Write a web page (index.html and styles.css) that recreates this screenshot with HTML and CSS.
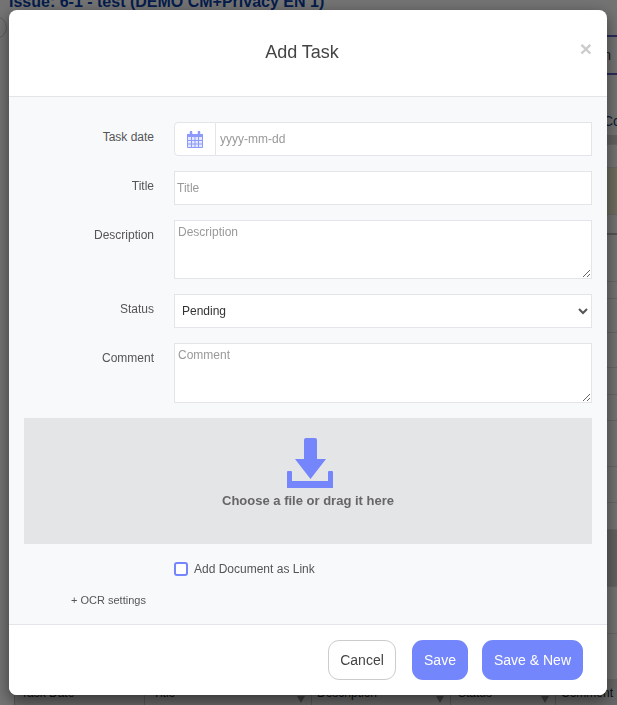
FILE: index.html
```html
<!DOCTYPE html>
<html lang="en">
<head>
<meta charset="utf-8">
<title>Add Task</title>
<link rel="stylesheet" href="styles.css">
</head>
<body>
<div class="page">
  <h1 class="issue-title">Issue: 6-1 - test (DEMO CM+Privacy EN 1)</h1>
  <div class="page-pill"></div>
  <div class="page-tab"><span class="page-tab-end">n</span></div>
  <div class="page-rows">
    <div class="page-row page-row-text"><span>Co</span></div>
    <div class="page-row page-row-band"></div>
    <div class="page-row"></div>
    <div class="page-row page-row-yellow"></div>
    <div class="page-row page-row-heavy"></div>
    <div class="page-row"></div>
    <div class="page-row"></div>
    <div class="page-row"></div>
    <div class="page-row"></div>
    <div class="page-row"></div>
    <div class="page-row"></div>
    <div class="page-row"></div>
    <div class="page-row"></div>
    <div class="page-row"></div>
    <div class="page-row page-row-band"></div>
    <div class="page-row"></div>
    <div class="page-row"></div>
  </div>
  <div class="table-head">
    <div class="th th-date">Task Date</div>
    <div class="th th-title">Title<i class="sort"></i></div>
    <div class="th th-desc">Description<i class="sort"></i></div>
    <div class="th th-status">Status<i class="sort"></i></div>
    <div class="th th-comment">Comment</div>
  </div>
</div>
<div class="backdrop"></div>
<div class="modal">
  <header class="modal-header">
    <h2 class="modal-title">Add Task</h2>
    <span class="modal-close">&times;</span>
  </header>
  <form class="modal-body">
    <div class="form-row">
      <label class="form-label">Task date</label>
      <div class="input-group">
        <span class="addon">
          <svg class="cal-icon" width="16" height="17" viewBox="0 0 16 17">
            <rect class="cal-cells" x="0.500" y="3.500" width="15" height="13"/>
            <rect class="cal-band" x="0" y="3" width="16" height="3"/>
            <path class="cal-rings" d="M4 1v3M12 1v3"/>
            <path class="cal-grid" d="M0.500 3.500h15v13H0.500zM1 9.500h14M1 13h14M4.500 6v10M8 6v10M11.500 6v10"/>
          </svg>
        </span>
        <input class="control control-date" type="text" placeholder="yyyy-mm-dd">
      </div>
    </div>
    <div class="form-row">
      <label class="form-label">Title</label>
      <input class="control" type="text" placeholder="Title">
    </div>
    <div class="form-row">
      <label class="form-label">Description</label>
      <textarea class="control area area-desc" placeholder="Description"></textarea>
    </div>
    <div class="form-row">
      <label class="form-label">Status</label>
      <div class="select-wrap">
        <select class="control select"><option>Pending</option></select>
        <svg class="select-chevron" width="10" height="7" viewBox="0 0 10 7"><path d="M1 1l4 4 4-4"/></svg>
      </div>
    </div>
    <div class="form-row">
      <label class="form-label">Comment</label>
      <textarea class="control area area-comment" placeholder="Comment"></textarea>
    </div>
    <div class="dropzone">
      <svg class="drop-icon" width="46" height="50" viewBox="0 0 46 50">
        <path d="M19 0h9a2 2 0 0 1 2 2v19h9L23.500 41 8 21h9V2a2 2 0 0 1 2-2z"/>
        <path d="M1 33h3a1 1 0 0 1 1 1v9h36v-9a1 1 0 0 1 1-1h3a1 1 0 0 1 1 1v16H0V34a1 1 0 0 1 1-1z"/>
      </svg>
      <div class="drop-text">Choose a file or drag it here</div>
    </div>
    <label class="link-check"><input class="check" type="checkbox"><span>Add Document as Link</span></label>
    <div class="ocr">+ OCR settings</div>
  </form>
  <footer class="modal-footer">
    <button class="btn btn-cancel" type="button">Cancel</button>
    <button class="btn btn-primary" type="button">Save</button>
    <button class="btn btn-primary btn-new" type="button">Save &amp; New</button>
  </footer>
</div>
</body>
</html>
```

FILE: styles.css
```css
* { box-sizing: border-box; }
html, body { margin: 0; height: 100%; overflow: hidden; }
body { font-family: "Liberation Sans", Arial, sans-serif; background: #fff; color: #555; font-size: 12px; }

.page { height: 705px; position: relative; display: flex; flex-direction: column; overflow: hidden; }
.issue-title { margin: -8px 0 0 9px; font-size: 16px; line-height: 20px; font-weight: 700; color: #0a3fa8; height: 20px; white-space: nowrap; }
.page-pill { position: absolute; left: -30px; top: 16px; width: 37px; height: 23px; border: 1px solid #ccc; border-radius: 12px; }
.page-tab { margin: 23px 0 0 590px; height: 40px; border-top: 2px solid #5a62c8; border-bottom: 2px solid #5a62c8; display: flex; justify-content: flex-end; align-items: center; padding-right: 6px; font-size: 14px; color: #333; }
.page-rows { flex: 1; margin-left: 590px; display: grid; grid-template-rows: 60px 10px 23px 47px 20px 47px 17px 34px 35px 27px 26px 46px 36px 27px 57px 47px 46px; }
.page-row { border-bottom: 1px solid #e2e2e2; }
.page-row-text { padding: 38px 0 0 13px; font-size: 14px; line-height: 16px; color: #14486e; white-space: nowrap; border-bottom: 0; }
.page-row-band { background: #d8d8d8; }
.page-row-yellow { background: #f4f1d0; }
.page-row-heavy { border-bottom: 2px solid #bbb; }
.table-head { height: 25px; flex: none; display: flex; margin-left: 14px; font-size: 12px; line-height: 14px; color: #222; background: #e2e2e2; }
.th { position: relative; padding: 6px 0 0 6px; border-left: 1px solid #bbb; white-space: nowrap; }
.th-date { width: 130px; }
.th-title { width: 167px; padding-left: 8px; }
.th-desc { width: 139px; padding-left: 5px; }
.th-status { width: 105px; padding-left: 7px; }
.th-comment { flex: 1; padding-left: 5px; }
.sort { position: absolute; right: 6px; top: 16px; width: 0; height: 0; border-left: 4px solid transparent; border-right: 4px solid transparent; border-top: 7px solid #888; }

.backdrop { position: fixed; inset: 0; background: rgba(0, 0, 0, .55); }

.modal { position: fixed; left: 9px; top: 10px; width: 598px; height: 685px; background: #fff; border-radius: 8px; box-shadow: 0 5px 15px rgba(0, 0, 0, .5); display: flex; flex-direction: column; overflow: hidden; }
.modal-header { height: 87px; flex: none; display: flex; align-items: center; justify-content: center; padding: 0 12px 2px 0; position: relative; border-bottom: 1px solid #e3e5e8; }
.modal-title { margin: 0; font-size: 18px; font-weight: 400; color: #444; }
.modal-close { position: absolute; right: 15px; top: 28px; font-size: 21px; line-height: 21px; font-weight: 700; color: #ccc; }

.modal-body { flex: 1; background: #f8f9fb; padding: 25px 15px 0; display: flex; flex-direction: column; }
.form-row { display: flex; align-items: flex-start; margin-bottom: 15px; }
.form-label { width: 130px; flex: none; text-align: right; padding-top: 8px; line-height: 14px; font-size: 12px; color: #555; margin-right: 20px; }
.control { flex: 1; min-width: 0; display: block; height: 34px; border: 1px solid #e3e5e9; background: #fff; margin: 0; padding: 0 2px; font: 12px "Liberation Sans", Arial, sans-serif; color: #333; outline: none; border-radius: 0; }
.control::placeholder { color: #999; opacity: 1; }
.input-group { flex: 1; display: flex; height: 34px; }
.addon { width: 42px; flex: none; display: flex; align-items: center; justify-content: center; background: #fff; border: 1px solid #e3e5e9; border-radius: 4px 0 0 4px; }
.cal-cells { fill: #e4e8fe; }
.cal-band { fill: #8c9bfb; }
.cal-rings { stroke: #8c9bfb; stroke-width: 2.500; stroke-linecap: round; fill: none; }
.cal-grid { stroke: #8c9bfb; stroke-width: 1; fill: none; }
.control-date { border-left: 0; padding-left: 4px; }
.area { resize: vertical; padding: 4px 3px; }
.area-desc { height: 59px; }
.area-comment { height: 60px; }
.select-wrap { flex: 1; position: relative; display: flex; }
.select { appearance: none; -webkit-appearance: none; padding-left: 7px; font-size: 12px; }
.select-chevron { position: absolute; right: 4px; top: 14px; fill: none; stroke: #555; stroke-width: 2; }

.dropzone { height: 126px; background: #e4e5e7; display: flex; flex-direction: column; align-items: center; padding-top: 20px; }
.drop-icon { display: block; fill: #7585fb; margin-left: 4px; }
.drop-text { font-size: 13px; line-height: 16px; font-weight: 700; color: #666; margin-top: 5px; }

.link-check { display: flex; align-items: center; gap: 6px; margin: 17px 0 0 150px; height: 16px; line-height: 14px; font-size: 12px; color: #555; }
.check { appearance: none; -webkit-appearance: none; margin: 0; width: 14px; height: 14px; border: 2px solid #7585fb; border-radius: 3px; background: #fff; }
.ocr { margin: 17px 0 0 47px; font-size: 11px; line-height: 13px; color: #555; }

.modal-footer { height: 71px; flex: none; border-top: 1px solid #e3e5e8; display: flex; justify-content: flex-end; align-items: flex-start; gap: 14px; padding: 15px 24px 0 0; background: #fff; }
.btn { height: 40px; margin: 0; border-radius: 11px; font: 14px "Liberation Sans", Arial, sans-serif; padding: 0; cursor: pointer; }
.btn-cancel { width: 68px; background: #fff; border: 1px solid #ccc; color: #444; margin-right: 2px; }
.btn-primary { width: 56px; background: #7386fb; border: 0; color: #fff; }
.btn-new { width: 101px; }
```
